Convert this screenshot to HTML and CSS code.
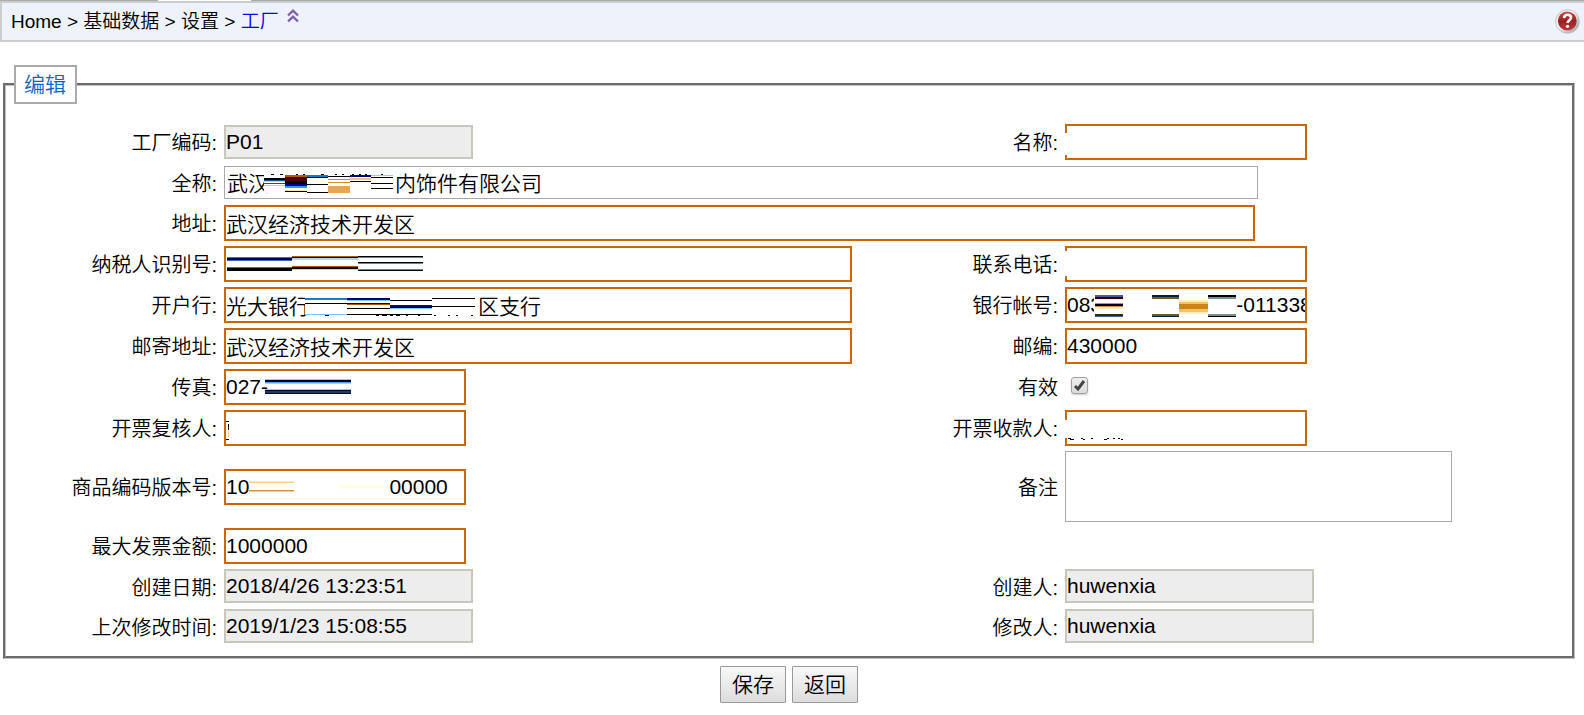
FILE: index.html
```html
<!DOCTYPE html>
<html lang="zh-CN">
<head>
<meta charset="utf-8">
<title>工厂</title>
<link rel="stylesheet" href="styles.css">
</head>
<body>
<header class="topbar">
  <nav class="crumbs">
    <span>Home &gt; 基础数据 &gt; 设置 &gt; <a href="#" class="current">工厂</a></span>
    <button type="button" class="icon-button collapse" aria-label="收起">
      <svg width="12" height="14" viewBox="0 0 12 14" fill="none" stroke="#7f5fb5" stroke-width="2.400"><path d="M1 6.500 6 1.700 11 6.500M1 12.500 6 7.700 11 12.500"/></svg>
    </button>
  </nav>
  <button type="button" class="icon-button" aria-label="帮助">
    <svg width="25" height="25" viewBox="0 0 25 25">
      <defs>
        <linearGradient id="rim" x1="0" y1="0" x2="1" y2="1"><stop offset="0" stop-color="#d9dcda"/><stop offset=".4" stop-color="#fff"/><stop offset="1" stop-color="#8e928f"/></linearGradient>
        <linearGradient id="red" x1="0" y1="0" x2="0" y2="1"><stop offset="0" stop-color="#c8474a"/><stop offset=".5" stop-color="#9c1f24"/><stop offset="1" stop-color="#b93a3d"/></linearGradient>
      </defs>
      <circle cx="12.500" cy="12.500" r="11.800" fill="url(#rim)" stroke="#b3b7b4" stroke-width=".8"/>
      <circle cx="12.300" cy="12" r="9.400" fill="url(#red)"/>
      <path d="M9 9.200C9.200 6.800 10.700 5.800 12.600 5.800 14.700 5.800 16 7 16 8.700 16 11.200 12.600 11.200 12.600 14" fill="none" stroke="#fff" stroke-width="2.600"/>
      <circle cx="12.500" cy="17.300" r="1.600" fill="#fff"/>
    </svg>
  </button>
</header>

<main class="page">
<form>
<fieldset class="panel">
  <legend>编辑</legend>
  <div class="grid">
    <label for="code">工厂编码:</label>
    <div class="field"><input id="code" class="readonly" readonly value="P01"></div>
    <label for="name">名称:</label>
    <div class="field"><input id="name" class="short">
      <svg class="mask" width="242" height="36"><path fill="#fff" d="M0 9h3v22H0z"/></svg></div>

    <label for="full">全称:</label>
    <div class="field span row-plain"><input id="full" class="plain" value="武汉　　　　　　内饰件有限公司">
      <svg class="mask" width="180" height="33" shape-rendering="crispEdges">
        <path fill="#fff" d="M40 8h129v19H40z"/>
        <path fill="#000" d="M47 8h3v1h-3zM56 8h3v1h-3zM72 8h2v1h-2zM79 8h2v1h-2zM97 8h3v1h-3zM111 8h2v1h-2zM118 8h2v1h-2zM128 8h2v1h-2zM135 8h2v1h-2zM141 8h2v1h-2zM157 8h2v1h-2z"/>
        <path fill="#000" d="M40 12h21v2H40zM61 15h22v3H61zM61 25h22v1H61zM83 11h21v1H83zM83 18h21v1H83zM83 26h21v1H83zM104 10h22v1h-22zM126 15h21v1h-21zM147 11h22v1h-22zM147 17h22v1h-22zM147 22h22v1h-22z"/>
        <path fill="#16509a" d="M40 14h21v1H40zM40 17h21v1H40z"/>
        <path fill="#a9d8ff" d="M40 15h21v1H40z"/>
        <path fill="#f6c08a" d="M40 19h21v1H40zM126 12h21v2h-21z"/>
        <path fill="#b35c00" d="M61 9h22v2H61z"/><path fill="#4d0000" d="M61 11h22v4H61z"/>
        <path fill="#000090" d="M61 18h22v2H61zM126 9h21v2h-21z"/>
        <path fill="#2f9aeb" d="M61 20h22v2H61z"/><path fill="#ffe3a4" d="M61 24h22v1H61z"/>
        <path fill="#167bc4" d="M83 9h21v2H83z"/><path fill="#8ccdfa" d="M147 9h22v1h-22z"/>
        <path fill="#cf8a20" d="M104 13h22v1h-22zM104 16h22v1h-22z"/><path fill="#e8a650" d="M104 20h22v7h-22z"/>
      </svg></div>

    <label for="addr">地址:</label>
    <div class="field span"><input id="addr" class="wide" value="武汉经济技术开发区"></div>

    <label for="tax">纳税人识别号:</label>
    <div class="field"><input id="tax" class="long">
      <svg class="mask" width="210" height="36" shape-rendering="crispEdges">
        <path fill="#a85a10" d="M3 11h65v1H3zM3 21h65v1H3zM68 10h66v1H68zM68 20h66v1H68z"/>
        <path fill="#000052" d="M3 12h65v2H3zM68 11h66v1H68zM68 21h66v1H68z"/>
        <path fill="#3c62c0" d="M3 14h65v1H3z"/><path fill="#000" d="M3 22h65v3H3zM68 22h66v1H68zM134 10h65v1h-65zM134 16h65v1h-65zM134 24h65v1h-65z"/>
        <path fill="#a9d8ff" d="M68 12h66v2H68zM68 23h66v1H68z"/><path fill="#fff0c8" d="M68 19h66v1H68z"/>
        <path fill="#718487" d="M134 11h65v1h-65zM134 17h65v1h-65zM134 23h65v1h-65z"/>
      </svg></div>
    <label for="tel">联系电话:</label>
    <div class="field"><input id="tel" class="short">
      <svg class="mask" width="242" height="36"><path fill="#fff" d="M0 5h3v25H0z"/></svg></div>

    <label for="bank">开户行:</label>
    <div class="field"><input id="bank" class="long" value="光大银行　　　　　　　　区支行">
      <svg class="mask" width="260" height="36" shape-rendering="crispEdges">
        <path fill="#fff" d="M81 9h170v19H81z"/>
        <path fill="#000" d="M81 16h42v1H81zM123 21h43v1h-43zM123 27h43v1h-43zM166 13h42v1h-42zM166 20h42v1h-42zM166 27h42v1h-42zM208 11h43v1h-43zM208 19h43v1h-43z"/>
        <path fill="#000" d="M101 28h4v1h-4zM152 28h3v1h-3zM158 28h5v1h-5zM166 28h3v1h-3zM172 28h4v1h-4zM182 28h2v1h-2zM194 28h2v1h-2zM210 28h2v1h-2zM224 28h2v1h-2zM232 28h2v1h-2zM247 28h2v1h-2z"/>
        <path fill="#167bc4" d="M81 11h42v1H81z"/><path fill="#a85a10" d="M81 12h42v1H81zM123 17h43v1h-43z"/>
        <path fill="#80c4fa" d="M81 27h42v1H81zM123 13h43v1h-43zM166 21h42v1h-42z"/>
        <path fill="#00006a" d="M123 11h43v2h-43zM123 16h43v1h-43zM166 19h42v1h-42z"/><path fill="#650000" d="M166 18h42v1h-42z"/>
      </svg></div>
    <label for="acct">银行帐号:</label>
    <div class="field"><input id="acct" class="short" value="083                       -01133801">
      <svg class="mask" width="242" height="36" shape-rendering="crispEdges">
        <path fill="#fff" d="M29 8h142v22H29z"/>
        <path fill="#3f629f" d="M30 8h28v2H30zM30 29h28v1H30z"/><path fill="#350000" d="M30 10h28v2H30z"/>
        <path fill="#fff0bd" d="M30 12h28v1H30zM30 20h28v2H30zM114 13h29v3h-29zM114 25h29v2h-29z"/>
        <path fill="#d48a45" d="M30 16h28v1H30zM30 19h28v1H30z"/><path fill="#000025" d="M30 17h28v2H30z"/>
        <path fill="#3d2600" d="M30 27h28v2H30z"/>
        <path fill="#00263d" d="M87 8h27v2H87zM87 29h27v1H87z"/><path fill="#795721" d="M87 10h27v2H87zM87 27h27v2H87z"/>
        <path fill="#f7c070" d="M114 15h29v2h-29zM114 22h29v3h-29z"/><path fill="#ce8415" d="M114 17h29v5h-29z"/>
        <path fill="#000" d="M143 8h28v2h-28zM143 29h28v1h-28z"/><path fill="#7c8b8b" d="M143 10h28v2h-28zM143 27h28v2h-28z"/>
      </svg></div>

    <label for="mail">邮寄地址:</label>
    <div class="field"><input id="mail" class="long" value="武汉经济技术开发区"></div>
    <label for="zip">邮编:</label>
    <div class="field"><input id="zip" class="short" value="430000"></div>

    <label for="fax">传真:</label>
    <div class="field"><input id="fax" class="short" value="027-">
      <svg class="mask" width="140" height="36" shape-rendering="crispEdges">
        <path fill="#eab68a" d="M41 10h86v1H41zM41 20h86v1H41z"/><path fill="#000030" d="M41 11h86v2H41zM41 21h86v1H41zM41 24h86v1H41z"/>
        <path fill="#4da3f0" d="M41 13h86v1H41z"/><path fill="#a0d4ff" d="M41 14h86v1H41z"/><path fill="#143c66" d="M41 22h86v2H41z"/>
      </svg></div>
    <label for="valid">有效</label>
    <div class="field"><span class="check"><input id="valid" type="checkbox" checked>
      <svg class="mask" width="17" height="17" viewBox="0 0 17 17"><path d="M4 9 7 12 13 4" fill="none" stroke="#444" stroke-width="3"/></svg></span></div>

    <label for="reviewer">开票复核人:</label>
    <div class="field"><input id="reviewer" class="short">
      <svg class="mask" width="20" height="36" shape-rendering="crispEdges"><path d="M2 11h3v1H2zM4 14h1v6H4zM2 29h3v1H2z"/><path fill="#ffc67c" d="M4 21h1v6H4z"/></svg></div>
    <label for="payee">开票收款人:</label>
    <div class="field"><input id="payee" class="short">
      <svg class="mask" width="242" height="36" shape-rendering="crispEdges"><path fill="#fff" d="M0 10h3v18H0z"/><path d="M3 28h3v1H3zM5 29h4v1H5zM16 28h2v1h-2zM18 29h2v1h-2zM26 28h2v1h-2zM39 29h3v1h-3zM42 28h2v1h-2zM48 28h2v1h-2zM53 28h2v1h-2zM56 29h2v1h-2z"/></svg></div>

    <label for="ver">商品编码版本号:</label>
    <div class="field"><input id="ver" class="short" value="10                        00000">
      <svg class="mask" width="170" height="36" shape-rendering="crispEdges">
        <path fill="#fff0c4" d="M25 12h45v1H25z"/><path fill="#ffca88" d="M25 13h45v1H25zM25 22h45v1H25z"/><path fill="#d18b43" d="M25 21h45v1H25z"/><path fill="#ffffe0" d="M114 16h45v3h-45z"/>
      </svg></div>
    <label for="note">备注</label>
    <div class="field row-note"><textarea id="note"></textarea></div>

    <label for="max">最大发票金额:</label>
    <div class="field span"><input id="max" class="short" value="1000000"></div>

    <label for="created">创建日期:</label>
    <div class="field row-audit"><input id="created" class="readonly" readonly value="2018/4/26 13:23:51"></div>
    <label for="creator">创建人:</label>
    <div class="field row-audit"><input id="creator" class="readonly" readonly value="huwenxia"></div>

    <label for="changed">上次修改时间:</label>
    <div class="field row-audit"><input id="changed" class="readonly" readonly value="2019/1/23 15:08:55"></div>
    <label for="editor">修改人:</label>
    <div class="field row-audit"><input id="editor" class="readonly" readonly value="huwenxia"></div>
  </div>
</fieldset>
<div class="actions">
  <button type="button">保存</button>
  <button type="button">返回</button>
</div>
</form>
</main>
</body>
</html>
```
FILE: styles.css
```css
* { box-sizing: border-box; }

body {
  margin: 0;
  padding-top: 1px;
  background: linear-gradient(to right, #aaa 158px, #fff 158px, #fff 251px, #aaa 251px) top / 100% 1px no-repeat #fff;
  color: #000;
  font: 20px/24px "Liberation Sans", "Noto Sans CJK SC", sans-serif;
  font-weight: 350;
}

.topbar {
  display: flex;
  align-items: center;
  justify-content: space-between;
  height: 41px;
  padding: 0 4px 0 9px;
  border: 2px solid #ccc;
  border-right: 0;
  background: #eef2fb;
  font-size: 19px;
}

.crumbs { display: flex; align-items: center; gap: 8px; }
.current { color: #00f; text-decoration: none; }
.icon-button { display: flex; padding: 0; border: 0; background: none; }
.collapse { margin-bottom: 12px; }

.page { margin: 23px 9px 0 3px; }

.panel {
  margin: 0;
  padding: 20px 0 12px;
  border: 3px groove #c0c0c0;
}

.panel legend {
  margin-left: 8px;
  padding: 1px 9px 0 8px;
  border: 2px solid #aaa;
  color: #06c;
  font-size: 21px;
  line-height: 34px;
}

.grid {
  display: grid;
  grid-template-columns: 211fr 628fr 199fr 507fr;
  gap: 5px 7px;
  align-items: center;
}

.grid label { padding-top: 2px; text-align: right; white-space: nowrap; }

.field {
  position: relative;
  display: flex;
  align-items: center;
  min-width: 0;
  height: 36px;
}

.span { grid-column: span 3; }
.row-plain { height: 35px; }
.row-audit { height: 35px; align-items: flex-start; }
.row-note { height: 72px; align-items: flex-start; }

.field input, .field textarea {
  max-width: 100%;
  margin: 0;
  padding: 0;
  border: 2px solid #c60;
  border-radius: 0;
  background: #fff;
  color: #000;
  font: inherit;
  font-size: 21px;
}

.field input { height: 36px; }
.field .short { width: 242px; }
.field .long { width: 100%; }
.field .wide { width: 1031px; }
.field .plain { width: 1034px; height: 33px; padding: 0 2px 2px; border: 1px solid #a9a9a9; }
.field .readonly { width: 249px; height: 34px; border-color: #c9c7ba; background: #ededed; }
.field textarea { width: 387px; height: 71px; border: 1px solid #a9a9a9; resize: none; }

.mask {
  position: absolute;
  top: 0;
  left: 0;
  pointer-events: none;
}

.row-plain .mask { top: 1px; }

.check { position: relative; display: flex; margin: 0 0 4px 6px; }

.field .check input {
  width: 17px;
  height: 17px;
  border: 1px solid #a0a0a0;
  border-radius: 3px;
  background: linear-gradient(#eee, #dcdcdc);
  box-shadow: 0 1px 2px #ccc;
  appearance: none;
}

.actions { display: flex; justify-content: center; gap: 6px; margin-top: 7px; }

.actions button {
  height: 37px;
  padding: 1px 11px 0;
  border: 1px solid #999;
  border-radius: 1px;
  background: linear-gradient(#f8f8f8, #ddd);
  color: #000;
  font: inherit;
  font-size: 21px;
}
```
